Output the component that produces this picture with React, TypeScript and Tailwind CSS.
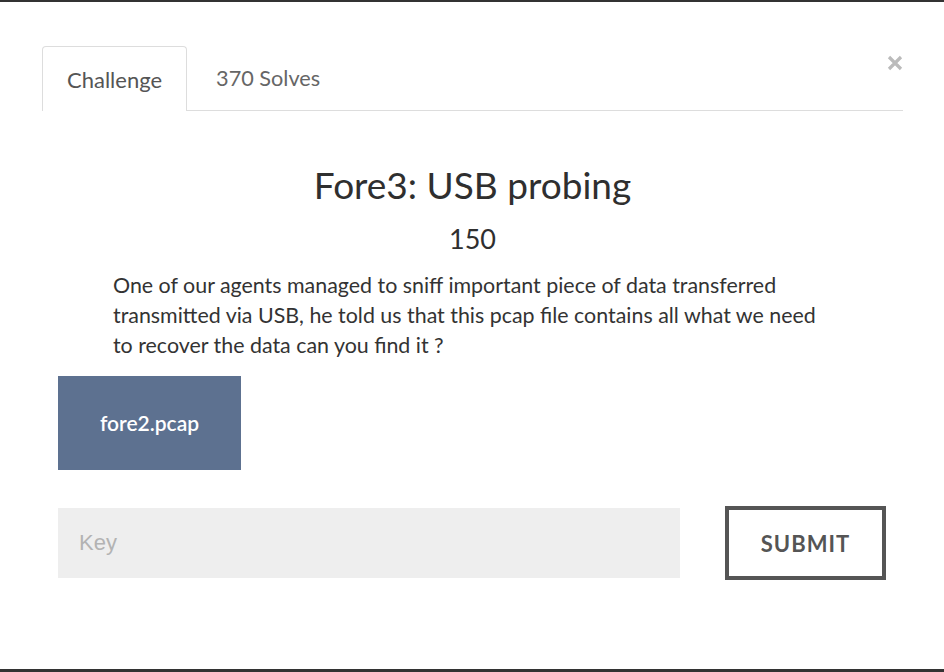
import React, { useState } from "react";

const tabs = ["Challenge", "370 Solves"];

const description = [
  "One of our agents managed to sniff important piece of data transferred",
  "transmitted via USB, he told us that this pcap file contains all what we need",
  "to recover the data can you find it ?",
];

export default function App() {
  const [active, setActive] = useState(0);
  const [key, setKey] = useState("");

  return (
    <div
      className="w-[944px] h-[672px] bg-white border-t-2 border-b-[3px] border-[#333] overflow-hidden"
      style={{ fontFamily: "Lato, 'Noto Sans', sans-serif" }}
    >
      <div className="pl-[42px] pt-[44px]">
        {/* tabs */}
        <div className="flex items-start justify-between border-b border-[#dddddd] w-[861px]">
          <div className="flex gap-[4px] -mb-px">
            {tabs.map((t, i) => (
              <button
                key={t}
                onClick={() => setActive(i)}
                className={
                  i === active
                    ? "h-[65px] px-[24px] text-[22px] text-[#555] bg-white border border-b-0 border-[#dddddd] rounded-t-[4px]"
                    : "h-[65px] px-[24px] text-[21.7px] text-[#666] border border-transparent"
                }
              >
                {t}
              </button>
            ))}
          </div>
          <button className="mt-[9px] w-[16px] h-[16px] text-[#bbbbbb]">
            <svg viewBox="0 0 16 16" className="w-[16px] h-[16px]">
              <path
                d="M2 2 L14 14 M14 2 L2 14"
                stroke="currentColor"
                strokeWidth="3.2"
                strokeLinecap="butt"
              />
            </svg>
          </button>
        </div>

        <div className="flex flex-col items-center w-[861px]">
          <h2 className="mt-[51px] text-[37px] leading-[46px] text-[#2f2f2f]">
            Fore3: USB probing
          </h2>
          <div className="mt-[14px] text-[27px] leading-[34px] text-[#2f2f2f]">
            150
          </div>
        </div>

        <p className="mt-[14px] ml-[71px] text-[21.4px] leading-[30px] text-[#333]">
          {description.map((line, i) => (
            <React.Fragment key={i}>
              {line}
              {i < description.length - 1 && <br />}
            </React.Fragment>
          ))}
        </p>

        <div className="mt-[16px] ml-[16px]">
          <button className="w-[183px] h-[94px] bg-[#5d7190] text-white text-[21px] font-semibold">
            fore2.pcap
          </button>
        </div>

        <div className="mt-[36px] ml-[16px] flex items-center gap-[45px]">
          <input
            value={key}
            onChange={(e) => setKey(e.target.value)}
            placeholder="Key"
            className="w-[622px] h-[70px] bg-[#eeeeee] pl-[21px] text-[22px] text-[#333] placeholder:text-[#b3b3b3] outline-none"
            style={{ fontFamily: "'Liberation Sans', Arial, sans-serif" }}
          />
          <button className="w-[161px] h-[74px] border-4 border-[#555] text-[22px] font-bold tracking-[1px] text-[#555]">
            SUBMIT
          </button>
        </div>
      </div>
    </div>
  );
}
